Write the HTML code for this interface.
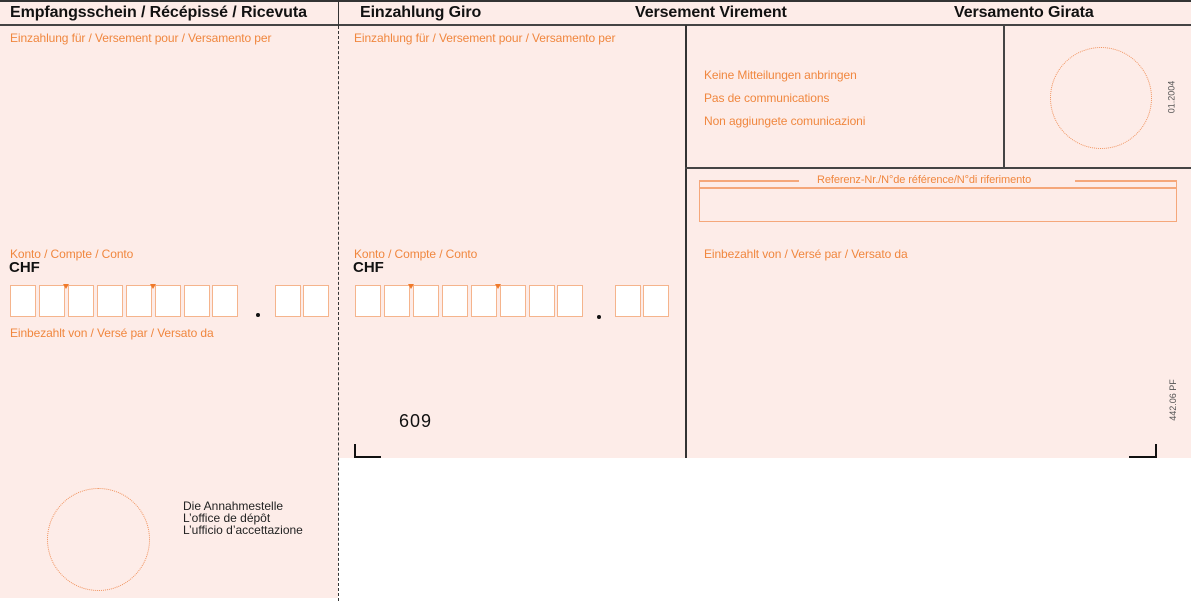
<!DOCTYPE html>
<html><head><meta charset="utf-8"><style>
*{margin:0;padding:0;box-sizing:border-box}
body{width:1191px;height:601px;background:#fff;position:relative;overflow:hidden;font-family:"Liberation Sans","DejaVu Sans",sans-serif}
.a{position:absolute}
.o{color:#f0873f;font-size:12px;letter-spacing:-0.1px;white-space:nowrap}
.h{font-weight:bold;font-size:16px;color:#111;white-space:nowrap;letter-spacing:-0.1px}
.bx{position:absolute;top:285px;width:26px;height:32px;border:1px solid #f5b48c;background:#fff}
.chf{font-weight:bold;font-size:15px;color:#111}
.tri{position:absolute;top:284px;width:0;height:0;border-left:3px solid transparent;border-right:3px solid transparent;border-top:5px solid #f07a2a}
</style></head><body>
<div class="a" style="left:0;top:0;width:1191px;height:458px;background:#fdece8"></div>
<div class="a" style="left:0;top:458px;width:338px;height:140px;background:#fdece8"></div>
<div class="a" style="left:0;top:0;width:1191px;height:2px;background:#333"></div>
<div class="a" style="left:0;top:24px;width:1191px;height:2px;background:#444"></div>
<div class="a" style="left:338px;top:0;width:1px;height:26px;background:#333"></div>
<div class="a" style="left:338px;top:26px;height:575px;border-left:1.5px dashed #333"></div>
<div class="a" style="left:685px;top:25px;width:1.5px;height:433px;background:#333"></div>
<div class="a" style="left:1003px;top:25px;width:1.5px;height:143px;background:#444"></div>
<div class="a" style="left:685px;top:167px;width:506px;height:1.5px;background:#444"></div>

<div class="a h" style="left:10px;top:4px">Empfangsschein / Récépissé / Ricevuta</div>
<div class="a h" style="left:360px;top:4px">Einzahlung Giro</div>
<div class="a h" style="left:635px;top:4px">Versement Virement</div>
<div class="a h" style="left:954px;top:4px">Versamento Girata</div>

<div class="a o" style="left:10px;top:31px">Einzahlung für / Versement pour / Versamento per</div>
<div class="a o" style="left:354px;top:31px">Einzahlung für / Versement pour / Versamento per</div>
<div class="a o" style="left:704px;top:68px">Keine Mitteilungen anbringen</div>
<div class="a o" style="left:704px;top:91px">Pas de communications</div>
<div class="a o" style="left:704px;top:114px">Non aggiungete comunicazioni</div>

<div class="a" style="left:1050px;top:47px;width:102px;height:102px;border:1px dotted #f0905a;border-radius:50%"></div>
<div class="a" style="left:1155px;top:92px;font-size:9px;color:#555;transform:rotate(-90deg);white-space:nowrap">01.2004</div>
<div class="a" style="left:1152px;top:395px;font-size:9px;color:#555;transform:rotate(-90deg);white-space:nowrap">442.06 PF</div>

<div class="a" style="left:699px;top:180px;width:478px;height:42px;border:1.5px solid #f5a77a;border-top:none"></div>
<div class="a" style="left:699px;top:180px;width:100px;height:1.5px;background:#f5a77a"></div>
<div class="a" style="left:1075px;top:180px;width:102px;height:1.5px;background:#f5a77a"></div>
<div class="a" style="left:699px;top:187px;width:478px;height:1.5px;background:#f5a77a"></div>
<div class="a o" style="left:817px;top:174px;font-size:11px">Referenz-Nr./N°de référence/N°di riferimento</div>
<div class="a o" style="left:704px;top:247px">Einbezahlt von / Versé par / Versato da</div>

<div class="a o" style="left:10px;top:247px">Konto / Compte / Conto</div>
<div class="a chf" style="left:9px;top:259px">CHF</div>
<div class="a o" style="left:354px;top:247px">Konto / Compte / Conto</div>
<div class="a chf" style="left:353px;top:259px">CHF</div>

<div class="bx" style="left:10px"></div><div class="bx" style="left:39px"></div><div class="bx" style="left:68px"></div><div class="bx" style="left:97px"></div><div class="bx" style="left:126px"></div><div class="bx" style="left:155px"></div><div class="bx" style="left:184px"></div><div class="bx" style="left:212px"></div>
<div class="tri" style="left:63px"></div><div class="tri" style="left:150px"></div>
<div class="a" style="left:256px;top:313px;width:4px;height:4px;background:#111;border-radius:50%"></div>
<div class="bx" style="left:275px"></div><div class="bx" style="left:303px"></div>

<div class="bx" style="left:355px"></div><div class="bx" style="left:384px"></div><div class="bx" style="left:413px"></div><div class="bx" style="left:442px"></div><div class="bx" style="left:471px"></div><div class="bx" style="left:500px"></div><div class="bx" style="left:529px"></div><div class="bx" style="left:557px"></div>
<div class="tri" style="left:408px"></div><div class="tri" style="left:495px"></div>
<div class="a" style="left:597px;top:315px;width:4px;height:4px;background:#111;border-radius:50%"></div>
<div class="bx" style="left:615px"></div><div class="bx" style="left:643px"></div>

<div class="a o" style="left:10px;top:326px">Einbezahlt von / Versé par / Versato da</div>

<div class="a" style="left:399px;top:411px;font-size:18px;color:#111;letter-spacing:1px">609</div>
<div class="a" style="left:354px;top:444px;width:2px;height:14px;background:#111"></div>
<div class="a" style="left:354px;top:456px;width:27px;height:2px;background:#111"></div>
<div class="a" style="left:1155px;top:444px;width:2px;height:14px;background:#111"></div>
<div class="a" style="left:1129px;top:456px;width:28px;height:2px;background:#111"></div>

<div class="a" style="left:47px;top:488px;width:103px;height:103px;border:1px dotted #f0905a;border-radius:50%"></div>
<div class="a" style="left:183px;top:500px;font-size:12px;line-height:12px;color:#222">Die Annahmestelle<br>L’office de dépôt<br>L’ufficio d’accettazione</div>
</body></html>
